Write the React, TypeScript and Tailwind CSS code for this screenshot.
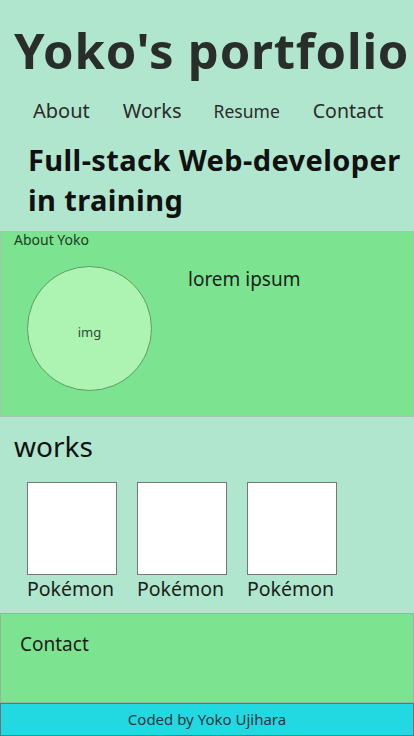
import React from 'react';

const works = ['Pokémon', 'Pokémon', 'Pokémon'];

export default function App() {
  return (
    <div className="min-h-[736px] w-[414px] bg-[#b0e6cd] font-['Noto_Sans','Open_Sans',sans-serif] text-[#1a1f1b] overflow-hidden">
      {/* header */}
      <header className="pt-[20px]">
        <h1 className="pl-[14px] text-[49px] leading-[60px] font-bold text-[#2a2e2b] whitespace-nowrap tracking-[0.8px]">
          Yoko's portfolio
        </h1>
        <nav className="flex items-baseline mt-[16px] h-[26px] text-[#2b2b2b]">
          <a className="ml-[33px] text-[20px]">About</a>
          <a className="ml-[33px] text-[20px]">Works</a>
          <a className="ml-[32px] text-[17.5px]">Resume</a>
          <a className="ml-[33px] text-[19.5px]">Contact</a>
        </nav>
        <h2 className="pl-[28px] mt-[18px] text-[29px] leading-[40px] font-bold text-[#111] tracking-[0.4px] whitespace-nowrap">
          Full-stack Web-developer
          <br />
          in training
        </h2>
      </header>

      {/* about */}
      <section className="mt-[11px] h-[186px] border border-[#a9c2b1] bg-[#7ce390]">
        <p className="pl-[13px] text-[14px] leading-[16px] text-[#1d3d25]">About Yoko</p>
        <div className="flex">
          <div className="ml-[26px] mt-[18px] w-[125px] h-[125px] rounded-full border border-[#5f9a68] bg-[#adf4b2] flex items-center justify-center">
            <span className="text-[13px] text-[#2f4a35] mt-[8px]">img</span>
          </div>
          <p className="ml-[36px] mt-[18px] text-[19px] leading-[26px]">lorem ipsum</p>
        </div>
      </section>

      {/* works */}
      <section className="pt-[12px] h-[196px]">
        <h3 className="pl-[14px] text-[28px] leading-[34px] text-[#111]">works</h3>
        <div className="flex gap-[20px] pl-[27px] mt-[19px]">
          {works.map((w, i) => (
            <div key={i} className="flex flex-col">
              <div className="w-[90px] h-[93px] bg-white border border-[#767676]" />
              <span className="text-[19.5px] leading-[26px] mt-[1px] text-[#1a1f1b]">{w}</span>
            </div>
          ))}
        </div>
      </section>

      {/* contact */}
      <section className="h-[90px] border border-[#93b79c] bg-[#7ce390] pl-[19px] pt-[17px]">
        <p className="text-[19px] leading-[26px]">Contact</p>
      </section>

      {/* footer */}
      <footer className="h-[33px] border border-[#707070] bg-[#22d9e1] flex items-center justify-center">
        <span className="text-[15px] text-[#1e3a40]">Coded by Yoko Ujihara</span>
      </footer>
    </div>
  );
}
